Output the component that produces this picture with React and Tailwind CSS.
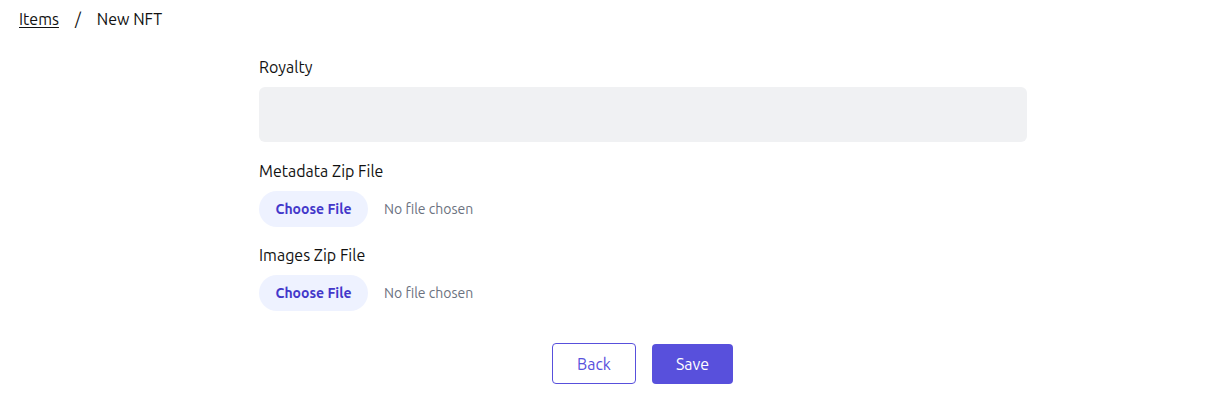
import React from 'react'

function FileField({ label, first }) {
  return (
    <div className={first ? 'mt-[17px]' : 'mt-4'}>
      <label className="block text-[16px] leading-6 text-[#111]">{label}</label>
      <div className="mt-2 flex items-center">
        <button className="h-9 w-[109px] rounded-full bg-[#eef2ff] text-[14px] font-bold text-[#4338ca]">Choose File</button>
        <span className="ml-4 text-[14px] text-[#6b7280]">No file chosen</span>
      </div>
    </div>
  )
}

export default function App() {
  return (
    <div className="min-h-[406px] bg-white text-[#111] font-['Ubuntu','Noto_Sans',sans-serif]">
      {/* breadcrumb */}
      <nav className="flex items-center px-[19px] pt-[7px] text-[16px] leading-6">
        <a className="underline underline-offset-2">Items</a>
        <span className="ml-[16px] mr-[16px]">/</span>
        <span>New NFT</span>
      </nav>

      <div className="ml-[259px] w-[768px] pt-[24px]">
        <div>
          <label className="block text-[16px] leading-6">Royalty</label>
          <div className="mt-[8px] h-[55px] w-full rounded-md bg-[#f0f1f3]" />
        </div>

        <FileField label="Metadata Zip File" first />
        <FileField label="Images Zip File" />

        <div className="mt-[32px] flex justify-center gap-4 pr-px">
          <button className="h-[41px] w-[84px] rounded border border-[#5850dc] text-[16px] text-[#5850dc]">Back</button>
          <button className="mt-px h-[40px] w-[81px] rounded bg-[#5850dc] text-[16px] text-white">Save</button>
        </div>
      </div>
    </div>
  )
}
